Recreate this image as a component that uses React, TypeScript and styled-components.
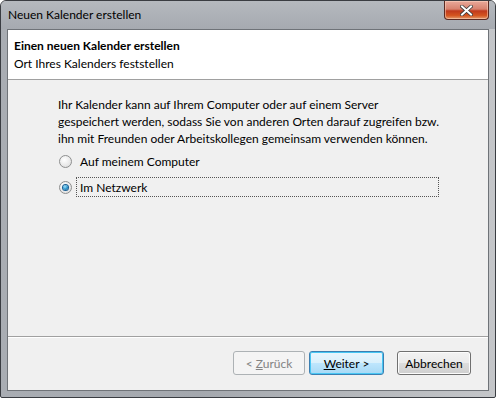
import React from "react";
import styled, { createGlobalStyle } from "styled-components";

const Global = createGlobalStyle`
  html, body { margin: 0; padding: 0; background: #ffffff; }
  body { font-family: "Segoe UI", Lato, "Noto Sans", sans-serif; }
`;

const Window = styled.div`
  box-sizing: border-box;
  width: 496px;
  height: 398px;
  display: flex;
  flex-direction: column;
  border: 1px solid #3a3d42;
  border-radius: 6px 6px 2px 2px;
  background: linear-gradient(90deg, #a9adb3 0%, #a4a8ae 40%, #b4b7bb 70%, #c4c6c9 100%);
  overflow: hidden;
`;

const TitleBar = styled.div`
  height: 28px;
  display: flex;
  align-items: flex-start;
  justify-content: space-between;
  padding-left: 7px;
  background: linear-gradient(180deg, #b5b9be 0%, #a6aab0 100%);
`;

const TitleText = styled.div`
  font-size: 12px;
  color: #000;
  line-height: 16px;
  margin-top: 6px;
`;

const CloseButton = styled.div`
  width: 45px;
  height: 19px;
  margin-right: 6px;
  box-sizing: border-box;
  border: 1px solid #5b2a22;
  border-top: none;
  border-radius: 0 0 4px 4px;
  background: linear-gradient(180deg, #e9a99a 0%, #d7826f 45%, #c0391c 55%, #d4541f 80%, #e39a6c 100%);
  display: flex;
  align-items: center;
  justify-content: center;
  box-shadow: inset 0 0 0 1px rgba(255, 220, 200, 0.5);
`;

const Client = styled.div`
  flex: 1;
  margin: 0 6px 6px 6px;
  border: 1px solid #6f7378;
  background: #f0f0f0;
  display: flex;
  flex-direction: column;
  font-size: 12px;
  color: #000;
`;

const Header = styled.div`
  height: 50px;
  background: #ffffff;
  border-bottom: 1px solid #a0a0a0;
  box-sizing: border-box;
  padding: 8px 0 0 6px;
  display: flex;
  flex-direction: column;
  gap: 2px;
`;

const HeaderTitle = styled.div`
  font-weight: bold;
  line-height: 16px;
`;

const HeaderSub = styled.div`
  line-height: 16px;
`;

const Body = styled.div`
  flex: 1;
  padding: 16px 0 0 50px;
  display: flex;
  flex-direction: column;
`;

const Paragraph = styled.p`
  margin: 0 0 3px 0;
  line-height: 17px;
  white-space: nowrap;
`;

const RadioRow = styled.label`
  display: flex;
  align-items: center;
  gap: 4px;
  height: 22px;
  margin-left: 1px;
  margin-bottom: 4px;
`;

const RadioLabel = styled.span<{ $focused?: boolean }>`
  display: inline-flex;
  align-items: center;
  height: 20px;
  padding: 0 3px;
  box-sizing: border-box;
  width: ${(p) => (p.$focused ? "363px" : "auto")};
  border: 1px dotted ${(p) => (p.$focused ? "#555" : "transparent")};
`;

const RadioCircle = styled.span`
  width: 13px;
  height: 13px;
  box-sizing: border-box;
  border-radius: 50%;
  border: 1px solid #8e8f8f;
  background: radial-gradient(circle at 40% 35%, #ffffff 0%, #f0f0f0 40%, #d8d8d8 100%);
  display: flex;
  align-items: center;
  justify-content: center;
  flex-shrink: 0;
`;

const RadioDot = styled.span`
  width: 5px;
  height: 5px;
  border-radius: 50%;
  background: radial-gradient(circle at 40% 35%, #a6e0f8 0%, #2f9ad0 50%, #0a4f86 100%);
  box-shadow: 0 0 0 1px #1b5f93;
`;

const Separator = styled.div`
  height: 1px;
  background: #a0a0a0;
  border-bottom: 1px solid #ffffff;
`;

const Footer = styled.div`
  height: 52px;
  display: flex;
  justify-content: flex-end;
  align-items: flex-start;
  padding: 13px 17px 0 0;
  box-sizing: border-box;
`;

const Button = styled.button<{ $variant?: "default" | "disabled" | "normal"; $w: number; $gap?: number }>`
  width: ${(p) => p.$w}px;
  height: 24px;
  margin-left: ${(p) => p.$gap ?? 0}px;
  box-sizing: border-box;
  border-radius: 3px;
  font-family: inherit;
  font-size: 12px;
  padding: 0;
  border: 1px solid
    ${(p) => (p.$variant === "default" ? "#3c7fb1" : p.$variant === "disabled" ? "#adb2b5" : "#707070")};
  color: ${(p) => (p.$variant === "disabled" ? "#838383" : "#000")};
  background: ${(p) =>
    p.$variant === "disabled"
      ? "#f4f4f4"
      : p.$variant === "default"
      ? "linear-gradient(180deg, #eaf6fd 0%, #d9f0fc 50%, #bee6fd 51%, #a7d9f5 100%)"
      : "linear-gradient(180deg, #f2f2f2 0%, #ebebeb 50%, #dddddd 51%, #cfcfcf 100%)"};
  box-shadow: ${(p) =>
    p.$variant === "default"
      ? "inset 0 0 0 1px #48c7f4"
      : p.$variant === "disabled"
      ? "none"
      : "inset 0 0 0 1px #fcfcfc"};
`;

const Mnemonic = styled.span`
  text-decoration: underline;
`;

export default function App() {
  return (
    <>
      <Global />
      <Window>
        <TitleBar>
          <TitleText>Neuen Kalender erstellen</TitleText>
          <CloseButton>
            <svg width="13" height="11" viewBox="0 0 13 11">
              <path
                d="M2 1.5 L11 9.5 M11 1.5 L2 9.5"
                stroke="#3a3a3a"
                strokeWidth="3.6"
                strokeLinecap="square"
              />
              <path
                d="M2 1.5 L11 9.5 M11 1.5 L2 9.5"
                stroke="#ffffff"
                strokeWidth="2"
                strokeLinecap="square"
              />
            </svg>
          </CloseButton>
        </TitleBar>
        <Client>
          <Header>
            <HeaderTitle>Einen neuen Kalender erstellen</HeaderTitle>
            <HeaderSub>Ort Ihres Kalenders feststellen</HeaderSub>
          </Header>
          <Body>
            <Paragraph>
              Ihr Kalender kann auf Ihrem Computer oder auf einem Server
              <br />
              gespeichert werden, sodass Sie von anderen Orten darauf zugreifen bzw.
              <br />
              ihn mit Freunden oder Arbeitskollegen gemeinsam verwenden können.
            </Paragraph>
            <RadioRow>
              <RadioCircle />
              <RadioLabel>Auf meinem Computer</RadioLabel>
            </RadioRow>
            <RadioRow>
              <RadioCircle>
                <RadioDot />
              </RadioCircle>
              <RadioLabel $focused>Im Netzwerk</RadioLabel>
            </RadioRow>
          </Body>
          <Separator />
          <Footer>
            <Button $variant="disabled" $w={72}>
              &lt; <Mnemonic>Z</Mnemonic>urück
            </Button>
            <Button $variant="default" $w={75} $gap={4}>
              <Mnemonic>W</Mnemonic>eiter &gt;
            </Button>
            <Button $variant="normal" $w={74} $gap={13}>
              Abbrechen
            </Button>
          </Footer>
        </Client>
      </Window>
    </>
  );
}
